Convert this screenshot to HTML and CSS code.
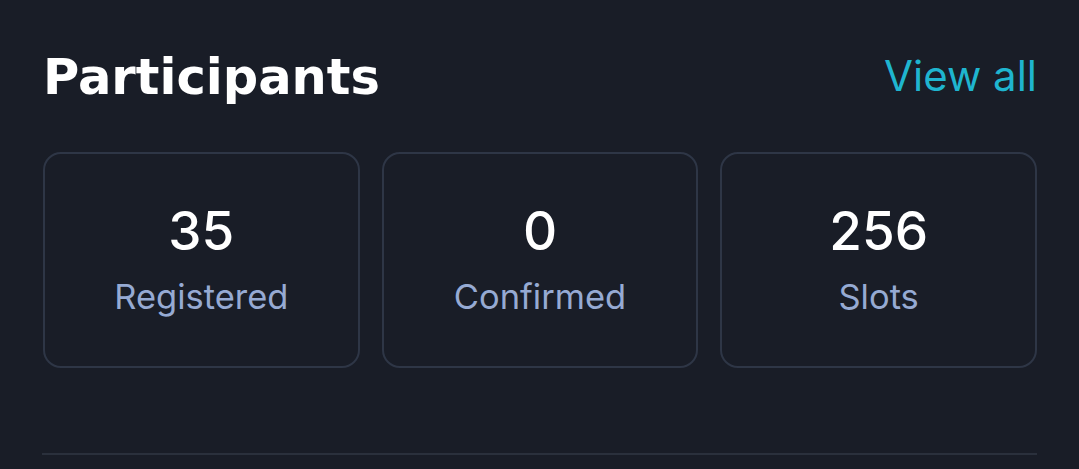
FILE: index.html
```html
<!DOCTYPE html>
<html lang="en">
<head>
<meta charset="utf-8">
<title>Participants</title>
<link rel="stylesheet" href="styles.css">
</head>
<body>
<main class="section">
  <header class="section-head">
    <h2 class="title">Participants</h2>
    <a class="view-all" href="#">View all</a>
  </header>
  <div class="stats">
    <div class="stat">
      <div class="stat-value">35</div>
      <div class="stat-label">Registered</div>
    </div>
    <div class="stat">
      <div class="stat-value">0</div>
      <div class="stat-label">Confirmed</div>
    </div>
    <div class="stat">
      <div class="stat-value">256</div>
      <div class="stat-label">Slots</div>
    </div>
  </div>
  <hr class="divider">
</main>
</body>
</html>
```

FILE: styles.css
```css
html, body {
  margin: 0;
  padding: 0;
  background: #191d27;
  height: 100%;
}

body {
  font-family: Inter, "Noto Sans", sans-serif;
  color: #ffffff;
}

.section {
  padding: 42px 42px 0 43px;
}

.section-head {
  display: flex;
  align-items: center;
  justify-content: space-between;
  height: 68px;
}

.title {
  margin: 0;
  padding-top: 3px;
  font-family: "DejaVu Sans", sans-serif;
  font-weight: 700;
  font-size: 49.5px;
  line-height: 1;
  color: #ffffff;
  letter-spacing: 0;
}

.view-all {
  font-family: Inter, sans-serif;
  font-size: 42px;
  font-weight: 400;
  color: #1fb5cf;
  text-decoration: none;
  line-height: 1;
}

.stats {
  display: grid;
  grid-template-columns: repeat(3, 1fr);
  gap: 22px;
  margin-top: 42px;
}

.stat {
  height: 216px;
  box-sizing: border-box;
  border: 2px solid #2e3646;
  border-radius: 18px;
  display: flex;
  flex-direction: column;
  align-items: center;
  justify-content: center;
  gap: 22px;
}

.stat-value {
  font-size: 53px;
  font-weight: 500;
  line-height: 1;
  color: #ffffff;
}

.stat-label {
  font-size: 34.5px;
  font-weight: 400;
  line-height: 1;
  color: #96aad3;
}

.divider {
  margin: 85px 0 0 -1px;
  border: 0;
  height: 2px;
  background: #2a303c;
}
```
